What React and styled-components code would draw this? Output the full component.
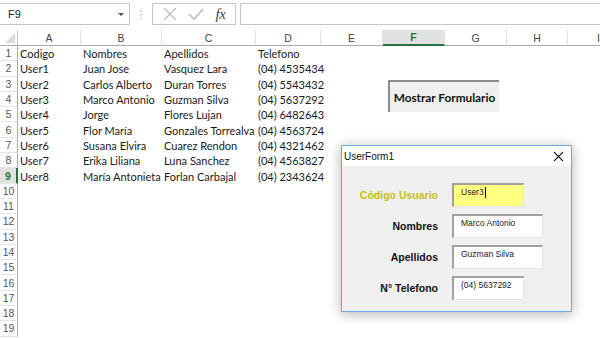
import React from 'react';
import styled, { createGlobalStyle, css } from 'styled-components';

const GlobalStyle = createGlobalStyle`
  html, body {
    margin: 0;
    padding: 0;
    background: #fff;
  }
  body {
    width: 600px;
    height: 338px;
    overflow: hidden;
    font-family: 'Lato', 'Liberation Sans', sans-serif;
  }
`;

const columns = [
  { id: 'A', w: 63 },
  { id: 'B', w: 81 },
  { id: 'C', w: 94 },
  { id: 'D', w: 65 },
  { id: 'E', w: 62 },
  { id: 'F', w: 62 },
  { id: 'G', w: 62 },
  { id: 'H', w: 61 },
  { id: 'I', w: 62 },
];

const rows = [
  ['Codigo', 'Nombres', 'Apellidos', 'Telefono'],
  ['User1', 'Juan Jose', 'Vasquez Lara', '(04) 4535434'],
  ['User2', 'Carlos Alberto', 'Duran Torres', '(04) 5543432'],
  ['User3', 'Marco Antonio', 'Guzman Silva', '(04) 5637292'],
  ['User4', 'Jorge', 'Flores Lujan', '(04) 6482643'],
  ['User5', 'Flor María', 'Gonzales Torrealva', '(04) 4563724'],
  ['User6', 'Susana Elvira', 'Cuarez Rendon', '(04) 4321462'],
  ['User7', 'Erika Liliana', 'Luna Sanchez', '(04) 4563827'],
  ['User8', 'María Antonieta', 'Forlan Carbajal', '(04) 2343624'],
];

const TOTAL_ROWS = 19;
const ACTIVE_ROW = 9;
const ACTIVE_COL = 'F';

const Page = styled.div`
  width: 600px;
  height: 338px;
  display: flex;
  flex-direction: column;
  background: #fff;
`;

const FormulaBar = styled.div`
  display: flex;
  align-items: stretch;
  height: 22px;
  margin-top: 3px;
  margin-bottom: 5px;
`;

const NameBox = styled.div`
  width: 130px;
  box-sizing: border-box;
  border: 1px solid #c6c6c6;
  border-left: none;
  display: flex;
  align-items: center;
  justify-content: space-between;
  padding: 0 5px 0 8px;
  font-family: 'Liberation Sans', sans-serif;
  font-size: 11px;
  color: #222;
`;

const Arrow = styled.span`
  width: 0;
  height: 0;
  border-left: 3px solid transparent;
  border-right: 3px solid transparent;
  border-top: 3px solid #555;
`;

const Dots = styled.div`
  width: 22px;
  display: flex;
  align-items: center;
  justify-content: center;
  color: #a8a8a8;
  font-size: 11px;
  font-family: 'DejaVu Sans', sans-serif;
`;

const FxBox = styled.div`
  width: 84px;
  box-sizing: border-box;
  border: 1px solid #c6c6c6;
  display: flex;
  align-items: center;
  justify-content: space-around;
  padding: 0 4px;
`;

const Fx = styled.span`
  font-family: 'Liberation Serif', serif;
  font-style: italic;
  font-size: 15px;
  color: #444;
  letter-spacing: -0.5px;
`;

const FormulaInput = styled.div`
  flex: 1;
  margin-left: 4px;
  border: 1px solid #c6c6c6;
  border-right: none;
`;

const Sheet = styled.div`
  position: relative;
  flex: 1;
  overflow: hidden;
`;

const Grid = styled.div`
  display: grid;
  grid-template-columns: 18px ${columns.map((c) => `${c.w}px`).join(' ')};
  grid-template-rows: 16px repeat(${TOTAL_ROWS}, 15.3px);
`;

const Corner = styled.div`
  position: relative;
  border-right: 1px solid #c8c8c8;
  border-bottom: 1px solid #ababab;
  box-sizing: border-box;
  &::after {
    content: '';
    position: absolute;
    right: 2px;
    bottom: 2px;
    border-left: 10px solid transparent;
    border-bottom: 10px solid #dadada;
  }
`;

const ColHead = styled.div`
  box-sizing: border-box;
  border-right: 1px solid #e1e1e1;
  border-bottom: 1px solid #ababab;
  display: flex;
  align-items: center;
  justify-content: center;
  font-family: 'Liberation Sans', sans-serif;
  font-size: 10.5px;
  color: #444;
  ${(p) =>
    p.$active &&
    css`
      background: #e1e1e1;
      border-bottom: 2px solid #217346;
      color: #217346;
      font-weight: bold;
    `}
`;

const RowHead = styled.div`
  box-sizing: border-box;
  border-right: 1px solid #ababab;
  border-bottom: 1px solid #e4e4e4;
  display: flex;
  align-items: center;
  justify-content: center;
  font-family: 'Liberation Sans', sans-serif;
  font-size: 10.5px;
  color: #555;
  ${(p) =>
    p.$active &&
    css`
      background: #e1e1e1;
      border-right: 2px solid #217346;
      color: #217346;
      font-weight: bold;
    `}
`;

const Cell = styled.div`
  display: flex;
  align-items: center;
  padding-left: 2px;
  font-size: 11px;
  color: #1a1a1a;
  white-space: nowrap;
  overflow: visible;
`;

const SheetButton = styled.div`
  position: absolute;
  left: 388px;
  top: 50px;
  width: 111px;
  height: 32px;
  box-sizing: border-box;
  background: #efefef;
  border-top: 2px solid #8c8c8c;
  border-left: 2px solid #8c8c8c;
  display: flex;
  align-items: center;
  justify-content: center;
  font-weight: bold;
  font-size: 11.8px;
  color: #111;
`;

const Window = styled.div`
  position: absolute;
  left: 341px;
  top: 115px;
  width: 231px;
  height: 167px;
  box-sizing: border-box;
  border: 1px solid #6ea7df;
  background: #f0f0f0;
  box-shadow: 0 2px 12px rgba(0, 0, 0, 0.3);
  display: flex;
  flex-direction: column;
  font-family: 'Liberation Sans', sans-serif;
`;

const TitleBar = styled.div`
  height: 20px;
  background: #fff;
  display: flex;
  align-items: center;
  justify-content: space-between;
  padding: 0 7px 0 2px;
  font-size: 10px;
  color: #111;
`;

const FormBody = styled.div`
  display: grid;
  grid-template-columns: 96px auto;
  column-gap: 14px;
  row-gap: 7px;
  padding-top: 17px;
  align-items: center;
`;

const Label = styled.div`
  text-align: right;
  font-weight: bold;
  font-size: 10.5px;
  color: ${(p) => p.$color || '#111'};
`;

const TextBox = styled.div`
  width: ${(p) => p.$w}px;
  height: 24px;
  box-sizing: border-box;
  background: ${(p) => p.$bg || '#fff'};
  border: 1px solid #e4e4e4;
  border-top: 2px solid #a0a0a0;
  border-left: 2px solid #a0a0a0;
  padding: 2px 0 0 7px;
  font-size: 8.5px;
  color: #222;
  display: flex;
  align-items: flex-start;
`;

const Caret = styled.span`
  display: inline-block;
  width: 1px;
  height: 11px;
  background: #000;
  margin-left: 1px;
`;

const CloseIcon = () => (
  <svg width="11" height="11" viewBox="0 0 11 11">
    <path d="M1 1 L10 10 M10 1 L1 10" stroke="#222" strokeWidth="1.1" fill="none" />
  </svg>
);

const CancelIcon = () => (
  <svg width="14" height="14" viewBox="0 0 14 14">
    <path d="M1 1 L13 13 M13 1 L1 13" stroke="#bdbdbd" strokeWidth="1.4" fill="none" />
  </svg>
);

const CheckIcon = () => (
  <svg width="16" height="14" viewBox="0 0 16 14">
    <path d="M1 7 L6 12 L15 2" stroke="#bdbdbd" strokeWidth="1.6" fill="none" />
  </svg>
);

const fields = [
  { label: 'Código Usuario', value: 'User3', w: 72, bg: '#ffff80', color: '#c6be17', caret: true },
  { label: 'Nombres', value: 'Marco Antonio', w: 91 },
  { label: 'Apellidos', value: 'Guzman Silva', w: 91 },
  { label: 'N° Telefono', value: '(04) 5637292', w: 72 },
];

const App = () => {
  const body = [];
  for (let r = 1; r <= TOTAL_ROWS; r++) {
    const data = rows[r - 1] || [];
    body.push(
      <RowHead key={`h${r}`} $active={r === ACTIVE_ROW}>
        {r}
      </RowHead>
    );
    columns.forEach((c, i) => {
      body.push(<Cell key={`${c.id}${r}`}>{data[i] || ''}</Cell>);
    });
  }

  return (
    <Page>
      <GlobalStyle />
      <FormulaBar>
        <NameBox>
          F9
          <Arrow />
        </NameBox>
        <Dots>⋮</Dots>
        <FxBox>
          <CancelIcon />
          <CheckIcon />
          <Fx>fx</Fx>
        </FxBox>
        <FormulaInput />
      </FormulaBar>
      <Sheet>
        <Grid>
          <Corner />
          {columns.map((c) => (
            <ColHead key={c.id} $active={c.id === ACTIVE_COL}>
              {c.id}
            </ColHead>
          ))}
          {body}
        </Grid>
        <SheetButton>Mostrar Formulario</SheetButton>
        <Window>
          <TitleBar>
            UserForm1
            <CloseIcon />
          </TitleBar>
          <FormBody>
            {fields.map((f) => (
              <React.Fragment key={f.label}>
                <Label $color={f.color}>{f.label}</Label>
                <TextBox $w={f.w} $bg={f.bg}>
                  {f.value}
                  {f.caret && <Caret />}
                </TextBox>
              </React.Fragment>
            ))}
          </FormBody>
        </Window>
      </Sheet>
    </Page>
  );
};

export default App;
